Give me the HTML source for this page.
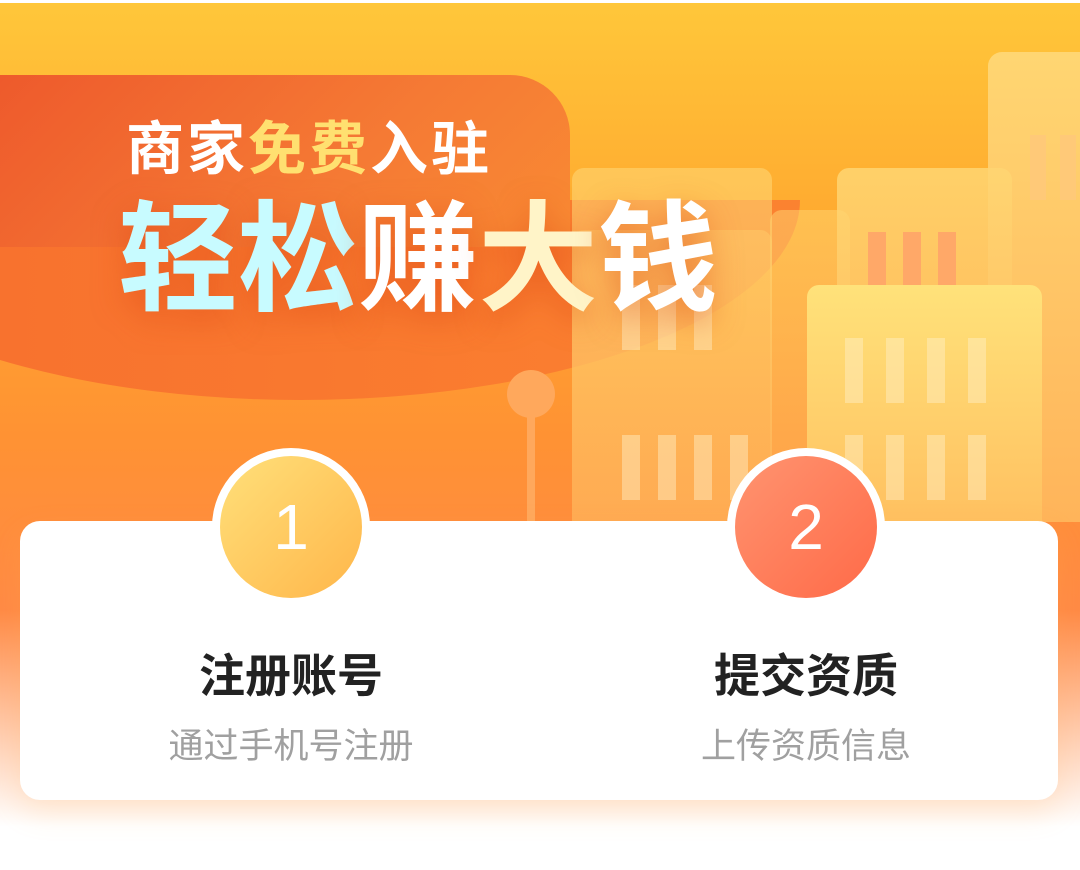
<!DOCTYPE html>
<html><head><meta charset="utf-8"><style>
*{margin:0;padding:0;box-sizing:border-box}
body{width:1080px;height:870px;overflow:hidden;background:#fff;font-family:"Liberation Sans","Noto Sans CJK SC",sans-serif;position:relative}
.a{position:absolute}
.bg{left:0;top:3px;width:1080px;height:867px;background:linear-gradient(180deg,#ffc73a 0%,#ffaa30 25%,#ff9233 50%,#ff8a45 70%,#fff 95%)}
.red{left:0;top:75px;width:570px;height:172px;border-radius:0 60px 0 0;background:linear-gradient(135deg,#ee5a2c 0%,#f57a34 60%,#f98a33 100%)}
.curve{left:-200px;top:200px;width:1000px;height:200px;border-radius:0 0 50% 50%/0 0 100% 100%;background:linear-gradient(90deg,#f76e2e,#fb8230)}
.b{background:linear-gradient(180deg,#ffd672,#ffb45a);border-radius:12px 12px 0 0}
.win{background:rgba(255,240,200,.45)}
.card{left:20px;top:521px;width:1038px;height:279px;background:#fff;border-radius:20px;box-shadow:0 12px 30px rgba(255,170,80,.2)}
.c{width:158px;height:158px;border-radius:50%;background:#fff;display:flex;align-items:center;justify-content:center}
.ci{width:142px;height:142px;border-radius:50%;display:flex;align-items:center;justify-content:center;color:#fff;font-size:64px}
.t1{font-size:46px;font-weight:bold;color:#222;width:400px;text-align:center}
.t2{font-size:35px;color:#a0a0a0;width:400px;text-align:center}
</style></head><body>
<div class="a bg"></div>
<div class="a curve"></div>
<div class="a b" style="left:988px;top:52px;width:92px;height:470px;border-radius:14px 0 0 0"></div>
<div class="a b" style="left:837px;top:168px;width:175px;height:360px;opacity:.85"></div>
<div class="a b" style="left:572px;top:168px;width:200px;height:360px;opacity:.6"></div>
<div class="a b" style="left:770px;top:210px;width:80px;height:320px;opacity:.5"></div>
<div class="a" style="left:868px;top:232px;width:18px;height:55px;background:#ffa868"></div>
<div class="a" style="left:903px;top:232px;width:18px;height:55px;background:#ffa868"></div>
<div class="a" style="left:938px;top:232px;width:18px;height:55px;background:#ffa868"></div>
<div class="a" style="left:1030px;top:135px;width:16px;height:65px;background:#ffc978"></div>
<div class="a" style="left:1060px;top:135px;width:16px;height:65px;background:#ffc978"></div>
<div class="a red"></div>
<div class="a b" style="left:572px;top:230px;width:200px;height:300px;opacity:.35"></div>
<div class="a b" style="left:807px;top:285px;width:235px;height:240px;background:linear-gradient(180deg,#ffe27a,#ffc060)"></div>
<div class="a" style="left:507px;top:370px;width:48px;height:48px;border-radius:50%;background:#ffa85c"></div>
<div class="a" style="left:527px;top:410px;width:8px;height:120px;background:#ffa85c"></div>
<div class="a win" style="left:845px;top:338px;width:18px;height:65px"></div>
<div class="a win" style="left:886px;top:338px;width:18px;height:65px"></div>
<div class="a win" style="left:927px;top:338px;width:18px;height:65px"></div>
<div class="a win" style="left:968px;top:338px;width:18px;height:65px"></div>
<div class="a win" style="left:845px;top:435px;width:18px;height:65px"></div>
<div class="a win" style="left:886px;top:435px;width:18px;height:65px"></div>
<div class="a win" style="left:927px;top:435px;width:18px;height:65px"></div>
<div class="a win" style="left:968px;top:435px;width:18px;height:65px"></div>
<div class="a win" style="left:622px;top:435px;width:18px;height:65px"></div>
<div class="a win" style="left:658px;top:435px;width:18px;height:65px"></div>
<div class="a win" style="left:694px;top:435px;width:18px;height:65px"></div>
<div class="a win" style="left:730px;top:435px;width:18px;height:65px"></div>
<div class="a win" style="left:622px;top:285px;width:18px;height:65px"></div>
<div class="a win" style="left:658px;top:285px;width:18px;height:65px"></div>
<div class="a win" style="left:694px;top:285px;width:18px;height:65px"></div>
<div class="a" style="left:126px;top:102px;font-size:58px;font-weight:bold;color:#fff;letter-spacing:3px;white-space:nowrap">商家<span style="color:#ffe070">免费</span>入驻</div>
<div class="a" style="left:118px;top:162px;font-size:120px;font-weight:bold;white-space:nowrap;letter-spacing:0px;text-shadow:0 10px 30px rgba(220,70,20,.5)"><span style="color:#c8fbff">轻松</span><span style="color:#fff">赚</span><span style="color:#fff4c8">大</span><span style="color:#fff">钱</span></div>
<div class="a card"></div>
<div class="a c" style="left:212px;top:448px"><div class="ci" style="background:linear-gradient(135deg,#ffe07a,#ffb64a)">1</div></div>
<div class="a c" style="left:727px;top:448px"><div class="ci" style="background:linear-gradient(135deg,#ff9470,#ff6a48)">2</div></div>
<div class="a t1" style="left:91px;top:640px">注册账号</div>
<div class="a t2" style="left:91px;top:718px">通过手机号注册</div>
<div class="a t1" style="left:606px;top:640px">提交资质</div>
<div class="a t2" style="left:606px;top:718px">上传资质信息</div>
</body></html>
